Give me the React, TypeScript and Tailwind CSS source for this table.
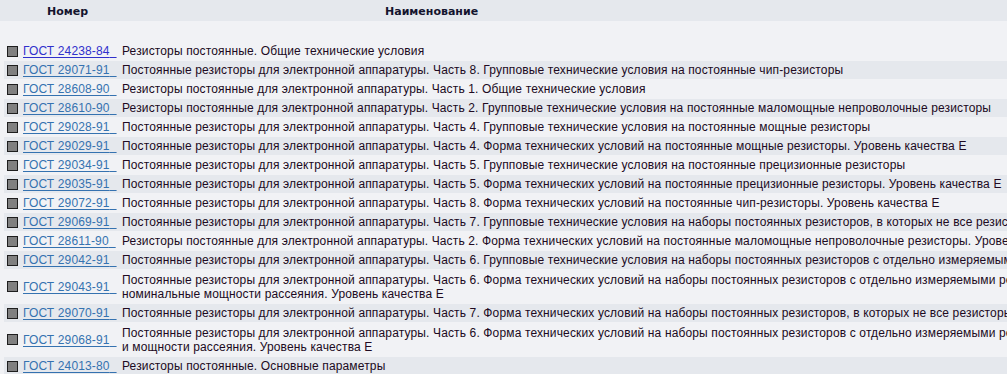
import React from "react";

type Row = { code: string; lines: string[]; visited?: boolean };

const rows: Row[] = [
  { code: "ГОСТ 24238-84", lines: ["Резисторы постоянные. Общие технические условия"], visited: true },
  { code: "ГОСТ 29071-91", lines: ["Постоянные резисторы для электронной аппаратуры. Часть 8. Групповые технические условия на постоянные чип-резисторы"] },
  { code: "ГОСТ 28608-90", lines: ["Резисторы постоянные для электронной аппаратуры. Часть 1. Общие технические условия"] },
  { code: "ГОСТ 28610-90", lines: ["Резисторы постоянные для электронной аппаратуры. Часть 2. Групповые технические условия на постоянные маломощные непроволочные резисторы"] },
  { code: "ГОСТ 29028-91", lines: ["Постоянные резисторы для электронной аппаратуры. Часть 4. Групповые технические условия на постоянные мощные резисторы"] },
  { code: "ГОСТ 29029-91", lines: ["Постоянные резисторы для электронной аппаратуры. Часть 4. Форма технических условий на постоянные мощные резисторы. Уровень качества Е"] },
  { code: "ГОСТ 29034-91", lines: ["Постоянные резисторы для электронной аппаратуры. Часть 5. Групповые технические условия на постоянные прецизионные резисторы"] },
  { code: "ГОСТ 29035-91", lines: ["Постоянные резисторы для электронной аппаратуры. Часть 5. Форма технических условий на постоянные прецизионные резисторы. Уровень качества Е"] },
  { code: "ГОСТ 29072-91", lines: ["Постоянные резисторы для электронной аппаратуры. Часть 8. Форма технических условий на постоянные чип-резисторы. Уровень качества Е"] },
  { code: "ГОСТ 29069-91", lines: ["Постоянные резисторы для электронной аппаратуры. Часть 7. Групповые технические условия на наборы постоянных резисторов, в которых не все резисторы измеряются отдельно"] },
  { code: "ГОСТ 28611-90", lines: ["Резисторы постоянные для электронной аппаратуры. Часть 2. Форма технических условий на постоянные маломощные непроволочные резисторы. Уровень качества Е"] },
  { code: "ГОСТ 29042-91", lines: ["Постоянные резисторы для электронной аппаратуры. Часть 6. Групповые технические условия на наборы постоянных резисторов с отдельно измеряемыми резисторами"] },
  {
    code: "ГОСТ 29043-91",
    lines: [
      "Постоянные резисторы для электронной аппаратуры. Часть 6. Форма технических условий на наборы постоянных резисторов с отдельно измеряемыми резисторами, имеющими одинаковые",
      "номинальные мощности рассеяния. Уровень качества Е",
    ],
  },
  { code: "ГОСТ 29070-91", lines: ["Постоянные резисторы для электронной аппаратуры. Часть 7. Форма технических условий на наборы постоянных резисторов, в которых не все резисторы измеряются отдельно. Уровень качества Е"] },
  {
    code: "ГОСТ 29068-91",
    lines: [
      "Постоянные резисторы для электронной аппаратуры. Часть 6. Форма технических условий на наборы постоянных резисторов с отдельно измеряемыми резисторами, имеющими различные номинальные сопротивления",
      "и мощности рассеяния. Уровень качества Е",
    ],
  },
  { code: "ГОСТ 24013-80", lines: ["Резисторы постоянные. Основные параметры"] },
];

export default function App() {
  return (
    <div className="w-[1007px] h-[374px] overflow-hidden bg-[#f1f2f5] font-['Liberation_Sans',Arial,sans-serif] text-[12px] tracking-[0.14px] text-[#200a22]">
      <div className="h-[21px] pt-[3px] bg-[#e5e8ed] flex items-center font-['DejaVu_Sans',Verdana,sans-serif] font-bold text-[11px] tracking-normal text-[#14142e]">
        <div className="w-[385px] pl-[47px] shrink-0">Номер</div>
        <div>Наименование</div>
      </div>
      <div className="mt-[21px] flex flex-col gap-px">
        {rows.map((r, i) => (
          <div
            key={r.code}
            className={
              "ml-[4px] flex items-center min-h-[18px] " +
              (i % 2 === 1 ? "bg-[#e5e8ed]" : "")
            }
          >
            <div className="w-[118px] shrink-0 flex items-center pl-[3px]">
              <span className="w-[11px] h-[11px] shrink-0 border border-[#1e1e1e] bg-[#808080] mr-[5px]" />
              <a
                href="#"
                className={
                  "whitespace-nowrap underline underline-offset-[2px] leading-[14px] " +
                  (r.visited ? "text-[#3030cc]" : "text-[#3572b0]")
                }
              >
                {r.code}&nbsp;&nbsp;
              </a>
            </div>
            <div
              className={
                "leading-[14px] whitespace-nowrap " +
                (r.lines.length > 1 ? "py-[2.5px]" : "py-[2px]")
              }
            >
              {r.lines.map((l, k) => (
                <div key={k}>{l}</div>
              ))}
            </div>
          </div>
        ))}
      </div>
    </div>
  );
}
